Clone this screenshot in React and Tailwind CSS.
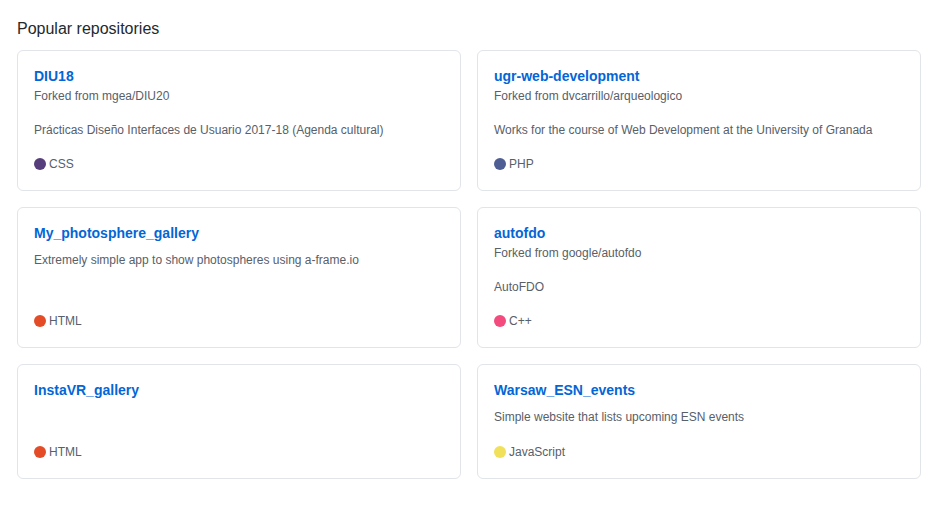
import React from 'react';

const repos = [
  {
    name: 'DIU18',
    fork: 'mgea/DIU20',
    desc: 'Prácticas Diseño Interfaces de Usuario 2017-18 (Agenda cultural)',
    lang: 'CSS',
    color: 'bg-[#563d7c]',
  },
  {
    name: 'ugr-web-development',
    fork: 'dvcarrillo/arqueologico',
    desc: 'Works for the course of Web Development at the University of Granada',
    lang: 'PHP',
    color: 'bg-[#4f5d95]',
  },
  {
    name: 'My_photosphere_gallery',
    desc: 'Extremely simple app to show photospheres using a-frame.io',
    lang: 'HTML',
    color: 'bg-[#e34c26]',
  },
  {
    name: 'autofdo',
    fork: 'google/autofdo',
    desc: 'AutoFDO',
    lang: 'C++',
    color: 'bg-[#f34b7d]',
  },
  {
    name: 'InstaVR_gallery',
    lang: 'HTML',
    color: 'bg-[#e34c26]',
  },
  {
    name: 'Warsaw_ESN_events',
    desc: 'Simple website that lists upcoming ESN events',
    lang: 'JavaScript',
    color: 'bg-[#f1e05a]',
  },
];

const RepoCard = ({ repo }) => (
  <div className="flex flex-col border border-[#e1e4e8] rounded-md pt-[15px] pb-[17px] px-4">
    <a href="#" className="text-sm leading-[21px] font-bold text-[#0366d6]">
      {repo.name}
    </a>
    {repo.fork && (
      <p className="mb-[9px] text-xs leading-[18px] text-[#586069]">
        Forked from {repo.fork}
      </p>
    )}
    {repo.desc && (
      <p
        className={`mt-[7px] ${repo.fork ? 'mb-4' : 'mb-[17px]'} text-xs leading-[18px] text-[#586069]`}
      >
        {repo.desc}
      </p>
    )}
    {/* language row sits at the bottom of the card */}
    <p className="mt-auto flex items-center text-xs leading-[18px] text-[#586069]">
      <span className={`inline-block w-3 h-3 rounded-full mr-[3px] ${repo.color}`}></span>
      {repo.lang}
    </p>
  </div>
);

export default function App() {
  return (
    <div
      className="bg-white pl-[17px] pr-[21px] pt-[17px] pb-8 text-[#24292e]"
      style={{ fontFamily: '"Liberation Sans", Arial, sans-serif' }}
    >
      <h2 className="text-base leading-6 font-normal mb-[9px]">Popular repositories</h2>
      <div className="grid grid-cols-2 gap-4">
        {repos.map((repo) => (
          <RepoCard key={repo.name} repo={repo} />
        ))}
      </div>
    </div>
  );
}
